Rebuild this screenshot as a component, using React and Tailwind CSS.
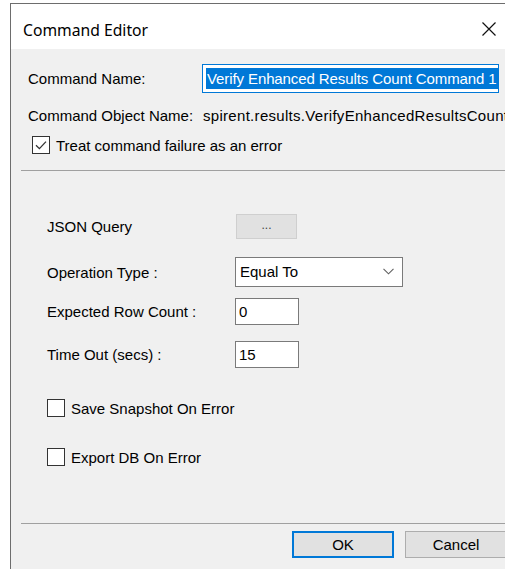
import React, { useState } from 'react';

const body = { fontFamily: '"Liberation Sans", Arial, sans-serif' };

const CheckBox = ({ checked, onChange, label, className = '' }) => (
  <label className={`flex items-center gap-[6px] cursor-default select-none ${className}`}>
    <span
      onClick={onChange}
      className="w-[18px] h-[18px] border border-[#333333] bg-white flex items-center justify-center"
    >
      {checked && (
        <svg width="14" height="14" viewBox="0 0 14 14" fill="none">
          <path d="M2 7.2 L5.4 10.6 L12 3.6" stroke="#333" strokeWidth="1.3" />
        </svg>
      )}
    </span>
    <span>{label}</span>
  </label>
);

const Row = ({ label, children, className = '' }) => (
  <div className={`flex items-center ${className}`}>
    <span className="w-[225px] pl-[36px] shrink-0">{label}</span>
    {children}
  </div>
);

export default function App() {
  const [treatAsError, setTreatAsError] = useState(true);
  const [snapshot, setSnapshot] = useState(false);
  const [exportDb, setExportDb] = useState(false);
  const [rowCount, setRowCount] = useState('0');
  const [timeout, setTimeoutValue] = useState('15');

  return (
    <div className="w-[505px] h-[569px] bg-white pl-[10px] pt-[3px] overflow-hidden">
      <div className="w-[500px] h-[570px] border-l border-t border-[#6d6d6d] flex flex-col text-black">
        {/* title bar */}
        <div className="h-[45px] bg-white flex items-center justify-between pl-[12px] pr-[8px] shrink-0">
          <span className="text-[15.7px] pt-[8px]" style={{ fontFamily: '"Noto Sans", "Open Sans", sans-serif' }}>
            Command Editor
          </span>
          <svg width="16" height="16" viewBox="0 0 16 16" className="mr-[5px] mt-[5px]">
            <path d="M1.5 1.5 L14.5 14.5 M14.5 1.5 L1.5 14.5" stroke="#111" strokeWidth="1.2" />
          </svg>
        </div>

        {/* dialog body */}
        <div className="flex-1 bg-[#f0f0f0] flex flex-col text-[15px] leading-none" style={body}>
          <div className="flex items-center h-[29px] mt-[15px]">
            <span className="w-[191px] pl-[17px] shrink-0">Command Name:</span>
            <div className="w-[297px] h-[29px] border border-[#0078d7] bg-white p-[3px] flex">
              <span className="bg-[#0078d7] text-white whitespace-nowrap flex items-center pl-[1px] pr-[2px] tracking-[-0.1px]">
                Verify Enhanced Results Count Command 1
              </span>
            </div>
          </div>

          <div className="flex items-center h-[24px] mt-[10px] whitespace-nowrap overflow-hidden">
            <span className="w-[192px] pl-[17px] shrink-0">Command Object Name:</span>
            <span className="tracking-[0.3px]">spirent.results.VerifyEnhancedResultsCountCommand</span>
          </div>

          <CheckBox
            className="ml-[21px] mt-[9px] h-[18px]"
            checked={treatAsError}
            onChange={() => setTreatAsError(!treatAsError)}
            label="Treat command failure as an error"
          />

          <div className="h-px bg-[#a0a0a0] ml-[10px] mr-[3px] mt-[16px]" />

          <Row label="JSON Query" className="h-[25px] mt-[43px]">
            <button className="w-[61px] h-[25px] bg-[#e1e1e1] border border-[#cfcfcf] text-[12px] text-[#444] pb-[4px]">
              ...
            </button>
          </Row>

          <Row label="Operation Type :" className="h-[30px] mt-[18px]">
            <div className="w-[168px] h-[30px] border border-[#7a7a7a] bg-white flex items-center justify-between pl-[4px] pr-[8px] pb-[2px] ml-[-1px]">
              <span>Equal To</span>
              <svg width="11" height="7" viewBox="0 0 11 7" fill="none">
                <path d="M0.5 0.8 L5.5 5.8 L10.5 0.8" stroke="#606060" strokeWidth="1.1" />
              </svg>
            </div>
          </Row>

          <Row label="Expected Row Count :" className="h-[27px] mt-[11px]">
            <input
              value={rowCount}
              onChange={(e) => setRowCount(e.target.value)}
              className="w-[64px] h-[27px] border border-[#7a7a7a] bg-white px-[3px] outline-none ml-[-1px]"
            />
          </Row>

          <Row label="Time Out (secs) :" className="h-[27px] mt-[16px]">
            <input
              value={timeout}
              onChange={(e) => setTimeoutValue(e.target.value)}
              className="w-[64px] h-[27px] border border-[#7a7a7a] bg-white px-[3px] outline-none ml-[-1px]"
            />
          </Row>

          <CheckBox
            className="ml-[36px] mt-[31px] h-[18px]"
            checked={snapshot}
            onChange={() => setSnapshot(!snapshot)}
            label="Save Snapshot On Error"
          />
          <CheckBox
            className="ml-[36px] mt-[31px] h-[18px]"
            checked={exportDb}
            onChange={() => setExportDb(!exportDb)}
            label="Export DB On Error"
          />

          <div className="h-px bg-[#a0a0a0] ml-[10px] mr-[3px] mt-[57px]" />

          <div className="flex justify-end gap-[11px] mr-[3px] mt-[7px]">
            <button className="w-[102px] h-[27px] bg-[#e1e1e1] border-2 border-[#0078d7]">OK</button>
            <button className="w-[102px] h-[27px] bg-[#e1e1e1] border border-[#adadad]">Cancel</button>
          </div>
        </div>
      </div>
    </div>
  );
}
